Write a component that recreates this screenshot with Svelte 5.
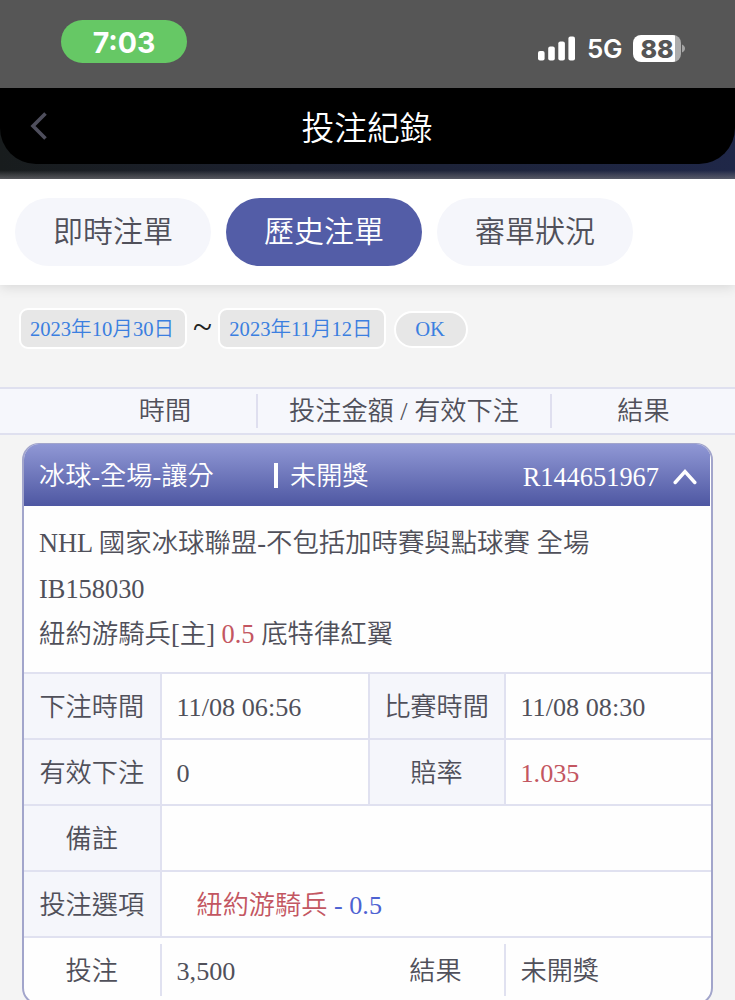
<script>
  const tabs = ['即時注單', '歷史注單', '審單狀況'];
  let activeTab = $state(1);
  let open = $state(true);

  const startDate = '2023年10月30日';
  const endDate = '2023年11月12日';

  const bet = {
    id: 'R144651967',
    type: '冰球-全場-讓分',
    status: '未開獎',
    league: 'NHL 國家冰球聯盟-不包括加時賽與點球賽 全場',
    code: 'IB158030',
    home: '紐約游騎兵[主]',
    handicap: '0.5',
    away: '底特律紅翼',
    betTime: '11/08 06:56',
    gameTime: '11/08 08:30',
    valid: '0',
    odds: '1.035',
    note: '',
    pick: '紐約游騎兵',
    amount: '3,500'
  };
</script>

<div class="screen">
  <div class="status-bar">
    <div class="clock">7:03</div>
    <div class="indicators">
      <svg class="signal" width="38" height="25" viewBox="0 0 38 25">
        <rect x="0" y="15" width="6.6" height="9.5" rx="2" />
        <rect x="10.2" y="10.5" width="6.6" height="14" rx="2" />
        <rect x="20.3" y="5.5" width="6.6" height="19" rx="2" />
        <rect x="30.4" y="0.5" width="6.6" height="24" rx="2" />
      </svg>
      <span class="network">5G</span>
      <div class="battery"><span>88</span></div>
      <svg class="battery-tip" width="3" height="9" viewBox="0 0 3 9">
        <path d="M0 0.5C4 2 4 7 0 8.5Z" />
      </svg>
    </div>
  </div>

  <div class="nav-wrap">
    <header class="nav">
      <button class="back" aria-label="返回">
        <svg width="18" height="28" viewBox="0 0 18 28">
          <path d="M15.5 1.5L3 14L15.5 26.5" fill="none" stroke="#4e4e5c" stroke-width="3.6" />
        </svg>
      </button>
      <h1>投注紀錄</h1>
    </header>
  </div>

  <nav class="tabs">
    {#each tabs as tab, i}
      <button class="tab" class:active={i === activeTab} onclick={() => (activeTab = i)}>{tab}</button>
    {/each}
  </nav>

  <div class="filter">
    <button class="date">{startDate}</button>
    <span class="tilde">~</span>
    <button class="date">{endDate}</button>
    <button class="ok">OK</button>
  </div>

  <div class="columns">
    <div class="col-time">時間</div>
    <div class="col-amount">投注金額 / 有效下注</div>
    <div class="col-result">結果</div>
  </div>

  <section class="card">
    <button class="card-head" onclick={() => (open = !open)}>
      <span class="type">{bet.type}</span>
      <span class="status">{bet.status}</span>
      <span class="number">{bet.id}</span>
      <svg class:closed={!open} width="24" height="17" viewBox="0 0 24 17">
        <path d="M2.2 14.5L12 3.5L21.8 14.5" fill="none" stroke="#fff" stroke-width="3.4" stroke-linecap="round" />
      </svg>
    </button>

    {#if open}
      <div class="match">
        <div>{bet.league}</div>
        <div>{bet.code}</div>
        <div>{bet.home} <span class="red">{bet.handicap}</span> {bet.away}</div>
      </div>

      <div class="details">
        <div class="label">下注時間</div>
        <div class="value">{bet.betTime}</div>
        <div class="label second">比賽時間</div>
        <div class="value">{bet.gameTime}</div>

        <div class="label">有效下注</div>
        <div class="value">{bet.valid}</div>
        <div class="label second">賠率</div>
        <div class="value red">{bet.odds}</div>

        <div class="label">備註</div>
        <div class="value wide">{bet.note}</div>

        <div class="label">投注選項</div>
        <div class="value wide pick"><span class="red">{bet.pick}</span>&nbsp;- {bet.handicap}</div>
      </div>

      <div class="summary">
        <div class="sum-label">投注</div>
        <div class="sum-value">{bet.amount}</div>
        <div class="sum-label">結果</div>
        <div class="sum-value">{bet.status}</div>
      </div>
    {/if}
  </section>
</div>

<style>
  :global(body) {
    background: #f4f4f4;
  }

  .screen {
    width: 735px;
    height: 1000px;
    overflow: hidden;
    background: #f4f4f4;
    color: #50505a;
    font-family: 'Liberation Serif', 'Noto Sans CJK TC', serif;
    font-size: 26.2px;
    font-weight: 350;
  }

  .screen * {
    box-sizing: border-box;
  }

  button {
    border: none;
    margin: 0;
    padding: 0;
    background: none;
    color: inherit;
    font: inherit;
    cursor: pointer;
  }

  .status-bar {
    display: flex;
    justify-content: space-between;
    align-items: flex-start;
    height: 88px;
    padding: 20px 50px 0 61px;
    background: #565656;
    color: #fff;
    font-family: Inter, 'Liberation Sans', sans-serif;
  }

  .clock {
    width: 126px;
    height: 43px;
    border-radius: 22px;
    background: #66c865;
    font-size: 28.5px;
    font-weight: 700;
    line-height: 45px;
    text-align: center;
  }

  .indicators {
    display: flex;
    align-items: center;
    height: 27px;
    margin-top: 15px;
  }

  .signal {
    fill: #fff;
  }

  .network {
    width: 46px;
    margin-left: 11px;
    font-size: 26px;
    font-weight: 600;
    line-height: 29px;
    letter-spacing: -0.4px;
  }

  .battery {
    width: 48px;
    height: 27px;
    border-radius: 8px;
    background: linear-gradient(to right, #fff 42px, #acacac 42px);
    color: #565656;
    font-size: 25px;
    font-weight: 800;
    line-height: 28px;
    text-align: center;
  }

  .battery-tip {
    margin-left: 1px;
    fill: #a5a5a5;
  }

  .nav-wrap {
    height: 91px;
    background:
      linear-gradient(to bottom, transparent 82px, rgba(125, 125, 130, 0.65) 91px),
      linear-gradient(to right, #181c1d, #1c2131 40%, #1f2748);
  }

  .nav {
    display: flex;
    align-items: center;
    height: 76px;
    padding: 0 30px;
    border-radius: 0 0 36px 36px;
    background: #000;
    color: #fff;
  }

  .back {
    display: flex;
    width: 18px;
  }

  h1 {
    flex: 1;
    margin: 6px 19px 0 0;
    font-size: 32.8px;
    font-weight: 350;
    line-height: 40px;
    text-align: center;
  }

  .tabs {
    position: relative;
    display: flex;
    gap: 15px;
    height: 106px;
    padding: 19px 15px;
    background: #fff;
    box-shadow: 0 2px 12px rgba(0, 0, 0, 0.12);
  }

  .tab {
    width: 196px;
    height: 68px;
    border-radius: 34px;
    background: #f5f6fb;
    font-size: 30px;
    line-height: 66px;
  }

  .tab.active {
    background: #535da7;
    color: #fff;
  }

  .filter {
    display: flex;
    align-items: center;
    height: 102px;
    padding: 0 19px;
    padding-bottom: 16px;
    color: #3b7fe0;
    font-size: 20.6px;
  }

  .date {
    width: 168px;
    height: 41px;
    padding-right: 2px;
    border: 2px solid #fff;
    border-radius: 9px;
    background: #e7e7e7;
    line-height: 39px;
  }

  .tilde {
    width: 31px;
    color: #222;
    font-size: 35px;
    line-height: 32px;
    text-align: center;
  }

  .ok {
    width: 74px;
    height: 37px;
    margin: 3px 0 0 8px;
    border: 2px solid #fff;
    border-radius: 19px;
    background: #e7e7e7;
    line-height: 31px;
    padding-right: 2px;
  }

  .columns {
    display: flex;
    align-items: center;
    height: 48px;
    border: solid #dfe0ef;
    border-width: 2px 0;
    background: #f6f7fc;
    line-height: 36px;
    text-align: center;
  }

  .columns > div {
    height: 34px;
  }

  .col-time {
    width: 258px;
    padding-left: 74px;
    border-right: 2px solid #dfdfef;
  }

  .col-amount {
    width: 294px;
    border-right: 2px solid #dfdfef;
  }

  .col-result {
    flex: 1;
  }

  .card {
    width: 691px;
    height: 562px;
    margin: 8px 0 0 22px;
    overflow: hidden;
    border: 2px solid #a2a5cb;
    border-top-width: 1px;
    border-radius: 17px;
    background: #fefefe;
  }

  .card-head {
    display: flex;
    align-items: center;
    width: 686px;
    height: 62px;
    padding: 3px 13px 0 15px;
    background: linear-gradient(#9098d5, #4e57a2);
    color: #fff;
    line-height: 34px;
  }

  .type {
    width: 235px;
    text-align: left;
  }

  .status {
    display: flex;
    align-items: center;
  }

  .status::before {
    content: '';
    width: 4px;
    height: 25px;
    margin: -2px 12px 0 0;
    background: #fff;
  }

  .number {
    margin: 0 14px 0 auto;
    font-size: 26.4px;
  }

  .closed {
    transform: rotate(180deg);
  }

  .match {
    height: 167px;
    padding: 15px 15px 0;
    font-size: 26.4px;
    line-height: 45.5px;
    white-space: nowrap;
  }

  .details {
    display: grid;
    grid-template-columns: 135.5px 208px 136px 1fr;
    grid-auto-rows: 66px;
    margin-top: -1px;
    line-height: 67px;
  }

  .label,
  .value {
    border-top: 2px solid #e0e1f0;
  }

  .label {
    background: #f5f6fb;
    text-align: center;
  }

  .label.second,
  .value {
    border-left: 2px solid #e0e1f0;
  }

  .value {
    padding-left: 15px;
  }

  .wide {
    grid-column: 2 / 5;
  }

  .pick {
    padding-left: 35px;
    color: #4d62d2;
  }

  .red {
    color: #c35661;
  }

  .summary {
    display: grid;
    grid-template-columns: 135.5px 208px 136px 1fr;
    padding-top: 6px;
    border-top: 2px solid #e0e1f0;
    line-height: 55px;
  }

  .sum-label {
    text-align: center;
  }

  .sum-value {
    height: 52px;
    padding-left: 15px;
    border-left: 2px solid #e0e1f0;
  }
</style>
